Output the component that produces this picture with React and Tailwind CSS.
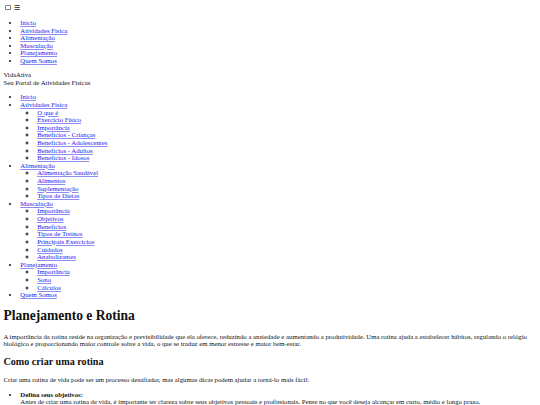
import React from "react";

const topLinks = ["Inicio", "Atividades Fisica", "Alimentação", "Musculação", "Planejamento", "Quem Somos"];

const menu = [
  {
    label: "Inicio",
  },
  {
    label: "Atividades Fisica",
    sub: [
      "O que é",
      "Exercício Físico",
      "Importância",
      "Benefícios - Crianças",
      "Benefícios - Adolescentes",
      "Benefícios - Adultos",
      "Benefícios - Idosos",
    ],
  },
  {
    label: "Alimentação",
    sub: ["Alimentação Saudável", "Alimentos", "Suplementação", "Tipos de Dietas"],
  },
  {
    label: "Musculação",
    sub: [
      "Importância",
      "Objetivos",
      "Benefícios",
      "Tipos de Treinos",
      "Principais Exercícios",
      "Cuidados",
      "Anabolizantes",
    ],
  },
  {
    label: "Planejamento",
    sub: ["Importância", "Sono", "Cálculos"],
  },
  {
    label: "Quem Somos",
  },
];

function Link({ children }) {
  return (
    <a href="#" className="text-[#1a1aee] underline decoration-[#8c8cf2]">
      {children}
    </a>
  );
}

export default function App() {
  return (
    // página sem estilo próprio, reduzida como no print
    <div className="[zoom:0.423] bg-white text-[#111] [font-family:'Liberation_Serif','Times_New_Roman',serif] text-[16px] leading-[18px] p-2">
      <header>
        <input
          type="checkbox"
          id="menu"
          className="appearance-none w-[13px] h-[13px] border-2 border-[#8a8a8a] rounded-[2px] bg-white m-[3px_3px_3px_4px] align-[-2px]"
        />
        <label htmlFor="menu"> ☰</label>

        <nav>
          <ul className="list-disc pl-10 my-4">
            {topLinks.map((t) => (
              <li key={t}>
                <Link>{t}</Link>
              </li>
            ))}
          </ul>
        </nav>

        <div>
          <span>VidaAtiva</span>
          <br />
          <span>Seu Portal de Atividades Físicas</span>
        </div>

        <nav>
          <ul className="list-disc pl-10 my-4">
            {menu.map((item) => (
              <li key={item.label}>
                <Link>{item.label}</Link>
                {item.sub && (
                  <ul className="[list-style-type:circle] pl-10">
                    {item.sub.map((s) => (
                      <li key={s}>
                        <Link>{s}</Link>
                      </li>
                    ))}
                  </ul>
                )}
              </li>
            ))}
          </ul>
        </nav>
      </header>

      <main>
        <h1 className="text-[2em] leading-[37px] font-bold my-[0.67em]">Planejamento e Rotina</h1>
        <p className="my-4">
          A importância da rotina reside na organização e previsibilidade que ela oferece, reduzindo a ansiedade e
          aumentando a produtividade. Uma rotina ajuda a estabelecer hábitos, regulando o relógio biológico e
          proporcionando maior controle sobre a vida, o que se traduz em menor estresse e maior bem-estar.
        </p>

        <h2 className="text-[1.5em] leading-[28px] font-bold my-[0.83em]">Como criar uma rotina</h2>
        <p className="my-4">
          Criar uma rotina de vida pode ser um processo desafiador, mas algumas dicas podem ajudar a torná-lo mais fácil:
        </p>

        <ul className="list-disc pl-10 mt-4">
          <li>
            <strong>Defina seus objetivos:</strong>
            <br />
            Antes de criar uma rotina de vida, é importante ter clareza sobre seus objetivos pessoais e profissionais.
            Pense no que você deseja alcançar em curto, médio e longo prazo.
          </li>
        </ul>
      </main>
    </div>
  );
}
